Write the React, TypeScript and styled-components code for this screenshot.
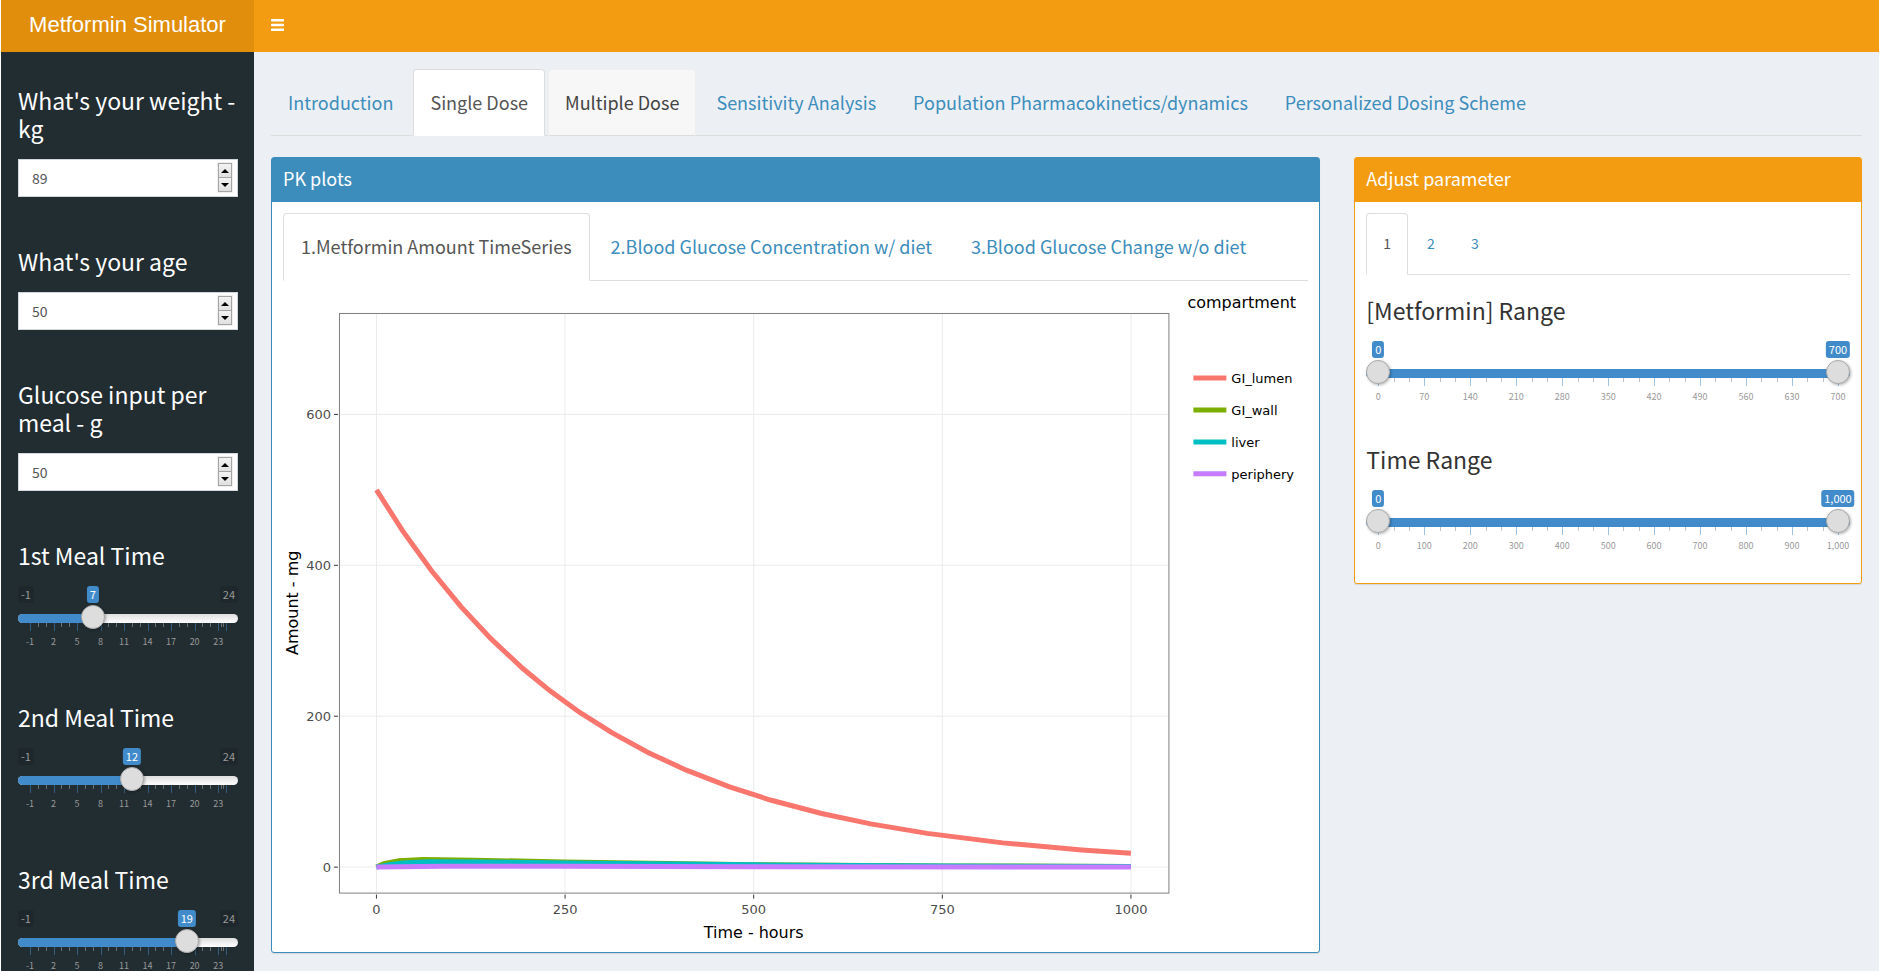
import React, { useId, useState } from "react";
import styled, { createGlobalStyle } from "styled-components";

const color = {
  orange: "#f39c12",
  orangeDark: "#e08e0b",
  blue: "#3c8dbc",
  slider: "#428bca",
  sidebar: "#222d32",
  page: "#ecf0f5",
  line: "#dddddd",
};

const GlobalStyle = createGlobalStyle`
  * { box-sizing: border-box; }
  body {
    margin: 0;
    background: #ffffff;
    color: #333333;
    font-family: "Noto Sans CJK SC", "Noto Sans", sans-serif;
    font-size: 14px;
    line-height: 20px;
  }
  h2, h3, ul { margin: 0; padding: 0; font-weight: 400; list-style: none; }
  a { text-decoration: none; }
`;

/* ---------- page frame ---------- */

const Page = styled.div`
  display: flex;
  flex-direction: column;
  height: 100vh;
  margin: 0 2px 0 1px;
  overflow: hidden;
`;

const Header = styled.header`
  display: flex;
  flex: 0 0 52px;
  background: ${color.orange};
`;

const Logo = styled.a`
  flex: 0 0 253px;
  background: ${color.orangeDark};
  color: #ffffff;
  font: 22px/50px "Liberation Sans", Arial, sans-serif;
  text-align: center;
`;

const MenuButton = styled.button`
  display: flex;
  align-items: center;
  padding: 0 17px 3px;
  border: 0;
  background: transparent;
  color: #ffffff;
  cursor: pointer;
`;

const Body = styled.div`
  display: flex;
  flex: 1;
  min-height: 0;
`;

const Sidebar = styled.aside`
  display: flex;
  flex-direction: column;
  flex: 0 0 253px;
  gap: 50px;
  padding: 34px 16px 34px 17px;
  overflow-y: auto;
  scrollbar-width: none;
  background: ${color.sidebar};
`;

const Content = styled.main`
  flex: 1;
  min-width: 0;
  padding: 17px;
  overflow: auto;
  scrollbar-width: none;
  background: ${color.page};
`;

const Columns = styled.div`
  display: flex;
  align-items: flex-start;
  margin: 21px -17px 0;
`;

const Column = styled.div<{ $share: number }>`
  flex: 0 0 calc(100% * ${(p) => p.$share} / 12);
  min-width: 0;
  padding: 0 17px;
`;

/* ---------- tabs ---------- */

type TabSize = "page" | "box" | "small";
type TabState = "plain" | "active" | "hover";

const tabPadding: Record<TabSize, string> = {
  page: "19px 16px 20px",
  box: "19px 17px 21px",
  small: "19px 16px 21px",
};

const TabList = styled.ul`
  display: flex;
  border-bottom: 1px solid ${color.line};
`;

const TabItem = styled.li<{ $size: TabSize }>`
  margin: 0 ${(p) => (p.$size === "small" ? 2 : 3)}px -1px 0;
`;

const TabLink = styled.a<{ $state: TabState; $size: TabSize }>`
  display: block;
  padding: ${(p) => tabPadding[p.$size]};
  border: 1px solid transparent;
  border-radius: 4px 4px 0 0;
  font-size: ${(p) => (p.$size === "small" ? 14 : 18)}px;
  line-height: ${(p) => (p.$size === "small" ? 20 : 26)}px;
  white-space: nowrap;
  color: ${(p) => (p.$state === "plain" ? color.blue : p.$state === "active" ? "#555555" : "#444444")};
  background: ${(p) => (p.$state === "active" ? "#ffffff" : p.$state === "hover" ? "#f7f7f7" : "transparent")};
  border-color: ${(p) =>
    p.$state === "active"
      ? `${color.line} ${color.line} #ffffff`
      : p.$state === "hover"
        ? `#eeeeee #eeeeee ${color.line}`
        : "transparent"};
`;

interface TabsProps {
  labels: string[];
  active: number;
  hovered?: number;
  size: TabSize;
}

function Tabs({ labels, active, hovered, size }: TabsProps) {
  return (
    <TabList>
      {labels.map((label, i) => (
        <TabItem key={label} $size={size}>
          <TabLink href="#" $size={size} $state={i === active ? "active" : i === hovered ? "hover" : "plain"}>
            {label}
          </TabLink>
        </TabItem>
      ))}
    </TabList>
  );
}

/* ---------- boxes ---------- */

const Box = styled.section<{ $accent: string }>`
  border: 1px solid ${(p) => p.$accent};
  border-radius: 3px;
  background: #ffffff;
  box-shadow: 0 1px 1px rgba(0, 0, 0, 0.1);
`;

const BoxTitle = styled.h2<{ $accent: string }>`
  padding: 8px 11px 12px;
  background: ${(p) => p.$accent};
  color: #ffffff;
  font-size: 18px;
  line-height: 24px;
`;

const BoxBody = styled.div`
  padding: 11px;
`;

const RangeGroups = styled.div`
  display: flex;
  flex-direction: column;
  gap: 37px;
  padding: 21px 0 15px;
`;

/* ---------- form controls ---------- */

const Field = styled.div`
  display: flex;
  flex-direction: column;
  flex: none;
  gap: 17px;
`;

const FieldLabel = styled.label<{ $dark?: boolean }>`
  color: ${(p) => (p.$dark ? "#ffffff" : "#333333")};
  font-size: 23px;
  line-height: 28px;
`;

const NumberBox = styled.div`
  display: flex;
  align-items: center;
  height: 38px;
  padding: 0 4px 1px 13px;
  border: 1px solid #d2d6de;
  background: #ffffff;
`;

const NumberInput = styled.input`
  flex: 1;
  min-width: 0;
  padding: 0;
  border: 0;
  outline: 0;
  background: transparent;
  color: #555555;
  font: inherit;
  line-height: 20px;
  appearance: textfield;
  &::-webkit-inner-spin-button { appearance: none; }
`;

const Spinner = styled.div`
  display: flex;
  flex-direction: column;
  width: 16px;
  border: 1px solid #efefef;
  background: #a5a5a5;
  padding: 1px;
  gap: 1px;
`;

const SpinButton = styled.button`
  display: flex;
  align-items: center;
  justify-content: center;
  height: 13px;
  padding: 0;
  border: 0;
  background: linear-gradient(#f2f2f2, #e0e0e0);
  color: #000000;
`;

function NumberField({ label, initial }: { label: string; initial: number }) {
  const id = useId();
  const [value, setValue] = useState(initial);
  return (
    <Field>
      <FieldLabel $dark htmlFor={id}>{label}</FieldLabel>
      <NumberBox>
        <NumberInput id={id} type="number" value={value} onChange={(e) => setValue(Number(e.target.value))} />
        <Spinner>
          <SpinButton type="button" aria-label="Increase" onClick={() => setValue(value + 1)}>
            <svg width="8" height="4" viewBox="0 0 8 4"><path d="M4 0 8 4H0z" fill="currentColor" /></svg>
          </SpinButton>
          <SpinButton type="button" aria-label="Decrease" onClick={() => setValue(value - 1)}>
            <svg width="8" height="4" viewBox="0 0 8 4"><path d="M0 0H8L4 4z" fill="currentColor" /></svg>
          </SpinButton>
        </Spinner>
      </NumberBox>
    </Field>
  );
}

/* The handle is 24px wide, so every value sits on a scale inset by 12px. */
const SliderFrame = styled.div`
  display: flex;
  flex-direction: column;
  height: 67px;
`;

const ValueRow = styled.div`
  position: relative;
  display: flex;
  justify-content: space-between;
  height: 17px;
  margin-bottom: 2px;
`;

const Limit = styled.span`
  padding: 0 3px;
  border-radius: 3px;
  background: rgba(0, 0, 0, 0.1);
  color: #999999;
  font-size: 11px;
  line-height: 16px;
`;

const Scale = styled.div`
  position: absolute;
  top: 0;
  left: 12px;
  right: 12px;
`;

const Bubble = styled.output`
  position: absolute;
  top: 0;
  padding: 0 3px;
  border-radius: 3px;
  background: ${color.slider};
  color: #ffffff;
  font-size: 11px;
  line-height: 17px;
  transform: translateX(-50%);
`;

const Rail = styled.div`
  position: relative;
  height: 24px;
`;

const Track = styled.div`
  position: absolute;
  inset: 9px 0 6px;
  border-radius: 8px;
  background: linear-gradient(#dedede, #ffffff);
  overflow: hidden;
`;

const Fill = styled.div`
  height: 100%;
  background: ${color.slider};
`;

const RangeInput = styled.input`
  position: absolute;
  inset: 0;
  z-index: 1;
  width: 100%;
  height: 24px;
  margin: 0;
  background: transparent;
  appearance: none;
  pointer-events: none;
  &::-webkit-slider-thumb {
    width: 24px;
    height: 24px;
    border: 1px solid #aaaaaa;
    border-radius: 50%;
    background: #dddddd;
    box-shadow: 1px 1px 3px rgba(0, 0, 0, 0.3);
    appearance: none;
    pointer-events: auto;
  }
`;

const TickRow = styled.div`
  position: relative;
  height: 24px;
  margin-top: -6px;
`;

const Tick = styled.span<{ $major: boolean }>`
  position: absolute;
  top: 0;
  width: 1px;
  height: ${(p) => (p.$major ? 8 : 4)}px;
  background: ${(p) => (p.$major ? color.slider : "#999999")};
  opacity: ${(p) => (p.$major ? 0.5 : 0.6)};
`;

const TickLabel = styled.span`
  position: absolute;
  top: 14px;
  color: #999999;
  font-size: 9px;
  line-height: 10px;
  transform: translateX(-50%);
`;

interface SliderProps {
  label: string;
  min: number;
  max: number;
  step: number;
  initial: number[];
  dark?: boolean;
}

function Slider({ label, min, max, step, initial, dark }: SliderProps) {
  const id = useId();
  const [values, setValues] = useState(initial);
  const share = (v: number) => (v - min) / (max - min);
  const from = values.length > 1 ? share(values[0]) : 0;
  const to = share(values[values.length - 1]);

  const labelled: number[] = [];
  for (let v = min; v <= max; v += step) labelled.push(v);
  const majors = labelled[labelled.length - 1] < max ? [...labelled, max] : labelled;
  const minors = majors
    .slice(0, -1)
    .flatMap((v, i) => [1, 2].map((n) => v + ((majors[i + 1] - v) * n) / 3));

  return (
    <Field>
      <FieldLabel $dark={dark} htmlFor={`${id}-0`}>{label}</FieldLabel>
      <SliderFrame>
        <ValueRow>
          {values.length === 1 && <Limit>{min}</Limit>}
          {values.length === 1 && <Limit>{max}</Limit>}
          <Scale>
            {values.map((v, i) => (
              <Bubble key={i} htmlFor={`${id}-${i}`} style={{ left: `${share(v) * 100}%` }}>
                {v.toLocaleString("en-US")}
              </Bubble>
            ))}
          </Scale>
        </ValueRow>
        <Rail>
          <Track>
            <Fill style={{ marginLeft: `${from * 100}%`, width: `${(to - from) * 100}%` }} />
          </Track>
          {values.map((v, i) => (
            <RangeInput
              key={i}
              id={`${id}-${i}`}
              type="range"
              aria-label={values.length > 1 ? `${label} ${i ? "maximum" : "minimum"}` : undefined}
              min={min}
              max={max}
              value={v}
              onChange={(e) => setValues(values.map((old, j) => (j === i ? Number(e.target.value) : old)))}
            />
          ))}
        </Rail>
        <TickRow>
          <Scale>
            {majors.map((v) => <Tick key={v} $major style={{ left: `${share(v) * 100}%` }} />)}
            {minors.map((v) => <Tick key={v} $major={false} style={{ left: `${share(v) * 100}%` }} />)}
            {labelled.map((v) => (
              <TickLabel key={v} style={{ left: `${share(v) * 100}%` }}>{v.toLocaleString("en-US")}</TickLabel>
            ))}
          </Scale>
        </TickRow>
      </SliderFrame>
    </Field>
  );
}

/* ---------- chart ---------- */

const ChartSvg = styled.svg`
  display: block;
  width: 100%;
  height: auto;
  font-family: "DejaVu Sans", Verdana, sans-serif;
  font-size: 13px;
`;

const ChartTitle = styled.text`
  font-size: 16px;
  fill: #000000;
`;

const TickText = styled.text`
  fill: #4d4d4d;
`;

const px = (t: number) => 93.5 + t * 0.755;
const py = (v: number) => 586.5 - v * 0.755;

const lumenTimes = [0, 35, 73, 112, 152, 194, 230, 270, 312, 360, 410, 468, 522, 590, 655, 730, 830, 935, 1000];

const series: { name: string; stroke: string; points: [number, number][] }[] = [
  {
    name: "GI_lumen",
    stroke: "#f8766d",
    points: lumenTimes.map((t) => [t, 500 * Math.exp(-0.003308 * t)]),
  },
  {
    name: "GI_wall",
    stroke: "#7cae00",
    points: [[0, 0], [10, 4.5], [30, 8.5], [62, 10.2], [130, 9.2], [250, 6.8], [500, 3.2], [750, 1.6], [1000, 0.9]],
  },
  {
    name: "liver",
    stroke: "#00bfc4",
    points: [[0, 0], [15, 3], [35, 5.6], [70, 7.2], [130, 6.9], [250, 5.6], [500, 3], [750, 1.5], [1000, 0.8]],
  },
  {
    name: "periphery",
    stroke: "#c77cff",
    points: [[0, 0], [90, 1.2], [250, 1], [500, 0.6], [1000, 0.1]],
  },
];

function Chart() {
  return (
    <ChartSvg viewBox="0 0 1026 660" role="img" aria-label="Metformin amount over time by compartment">
      {[0, 250, 500, 750, 1000].map((t) => (
        <g key={t}>
          <path d={`M${px(t)} 32.5V612.5`} stroke="#ebebeb" />
          <path d={`M${px(t)} 614V618`} stroke="#333333" />
          <TickText x={px(t)} y="633" textAnchor="middle">{t}</TickText>
        </g>
      ))}
      {[0, 200, 400, 600].map((v) => (
        <g key={v}>
          <path d={`M56 ${py(v)}H886.5`} stroke="#ebebeb" />
          <path d={`M51 ${py(v)}H55`} stroke="#333333" />
          <TickText x="48" y={py(v) + 5} textAnchor="end">{v}</TickText>
        </g>
      ))}
      {series.map((s) => (
        <polyline
          key={s.name}
          points={s.points.map(([t, v]) => `${px(t)},${py(v)}`).join(" ")}
          fill="none"
          stroke={s.stroke}
          strokeWidth="5"
        />
      ))}
      <rect x="56.5" y="32.5" width="830" height="580" fill="none" stroke="#7f7f7f" />
      <ChartTitle x="471" y="657" textAnchor="middle">Time - hours</ChartTitle>
      <ChartTitle transform="translate(15 322) rotate(-90)" textAnchor="middle">Amount - mg</ChartTitle>
      <ChartTitle x="905" y="27">compartment</ChartTitle>
      {series.map((s, i) => (
        <g key={s.name}>
          <path d={`M911 ${97 + i * 32}H944`} stroke={s.stroke} strokeWidth="5" />
          <text x="949" y={102 + i * 32}>{s.name}</text>
        </g>
      ))}
    </ChartSvg>
  );
}

/* ---------- app ---------- */

export default function App() {
  return (
    <>
      <GlobalStyle />
      <Page>
        <Header>
          <Logo href="#">Metformin Simulator</Logo>
          <MenuButton type="button" aria-label="Toggle navigation">
            <svg width="13" height="12" viewBox="0 0 13 12" fill="currentColor">
              <rect width="13" height="2.4" rx="0.6" />
              <rect y="4.8" width="13" height="2.4" rx="0.6" />
              <rect y="9.6" width="13" height="2.4" rx="0.6" />
            </svg>
          </MenuButton>
        </Header>
        <Body>
          <Sidebar>
            <NumberField label="What's your weight - kg" initial={89} />
            <NumberField label="What's your age" initial={50} />
            <NumberField label="Glucose input per meal - g" initial={50} />
            <Slider dark label="1st Meal Time" min={-1} max={24} step={3} initial={[7]} />
            <Slider dark label="2nd Meal Time" min={-1} max={24} step={3} initial={[12]} />
            <Slider dark label="3rd Meal Time" min={-1} max={24} step={3} initial={[19]} />
          </Sidebar>
          <Content>
            <Tabs
              size="page"
              active={1}
              hovered={2}
              labels={[
                "Introduction",
                "Single Dose",
                "Multiple Dose",
                "Sensitivity Analysis",
                "Population Pharmacokinetics/dynamics",
                "Personalized Dosing Scheme",
              ]}
            />
            <Columns>
              <Column $share={8}>
                <Box $accent={color.blue}>
                  <BoxTitle $accent={color.blue}>PK plots</BoxTitle>
                  <BoxBody>
                    <Tabs
                      size="box"
                      active={0}
                      labels={[
                        "1.Metformin Amount TimeSeries",
                        "2.Blood Glucose Concentration w/ diet",
                        "3.Blood Glucose Change w/o diet",
                      ]}
                    />
                    <Chart />
                  </BoxBody>
                </Box>
              </Column>
              <Column $share={4}>
                <Box $accent={color.orange}>
                  <BoxTitle $accent={color.orange}>Adjust parameter</BoxTitle>
                  <BoxBody>
                    <Tabs size="small" active={0} labels={["1", "2", "3"]} />
                    <RangeGroups>
                      <Slider label="[Metformin] Range" min={0} max={700} step={70} initial={[0, 700]} />
                      <Slider label="Time Range" min={0} max={1000} step={100} initial={[0, 1000]} />
                    </RangeGroups>
                  </BoxBody>
                </Box>
              </Column>
            </Columns>
          </Content>
        </Body>
      </Page>
    </>
  );
}
